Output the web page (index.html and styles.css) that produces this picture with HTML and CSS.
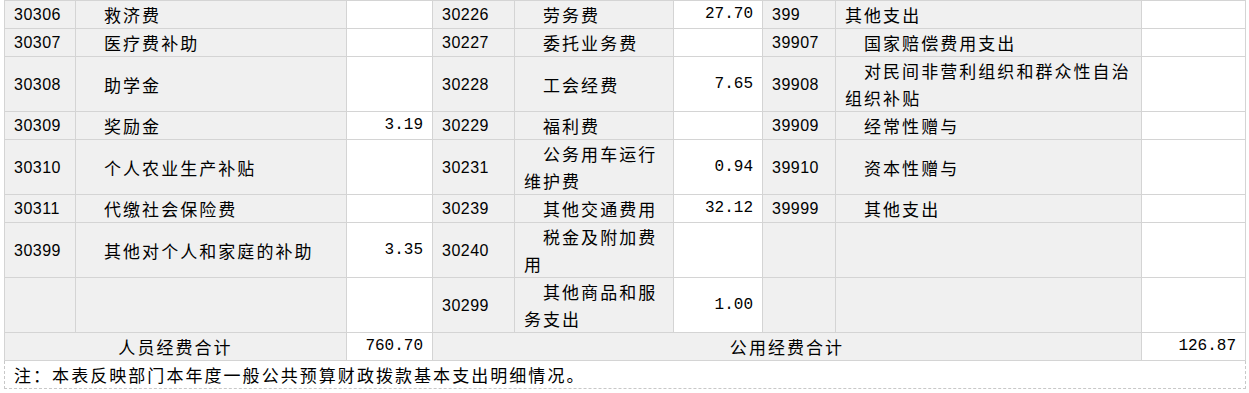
FILE: index.html
```html
<!DOCTYPE html>
<html lang="zh-CN">
<head>
<meta charset="utf-8">
<title>基本支出明细</title>
<link rel="stylesheet" href="styles.css">
</head>
<body>
<div class="wrap">
<table class="sheet">
  <colgroup>
    <col class="c1"><col class="c2"><col class="c3">
    <col class="c4"><col class="c5"><col class="c6">
    <col class="c7"><col class="c8"><col class="c9">
  </colgroup>
  <tbody>
    <tr>
      <td class="code">30306</td><td class="name">救济费</td><td class="amt"></td>
      <td class="code">30226</td><td class="name">劳务费</td><td class="amt">27.70</td>
      <td class="code">399</td><td class="name flat">其他支出</td><td class="amt"></td>
    </tr>
    <tr>
      <td class="code">30307</td><td class="name">医疗费补助</td><td class="amt"></td>
      <td class="code">30227</td><td class="name">委托业务费</td><td class="amt"></td>
      <td class="code">39907</td><td class="name">国家赔偿费用支出</td><td class="amt"></td>
    </tr>
    <tr>
      <td class="code">30308</td><td class="name">助学金</td><td class="amt"></td>
      <td class="code">30228</td><td class="name">工会经费</td><td class="amt">7.65</td>
      <td class="code">39908</td><td class="name">对民间非营利组织和群众性自治组织补贴</td><td class="amt"></td>
    </tr>
    <tr>
      <td class="code">30309</td><td class="name">奖励金</td><td class="amt">3.19</td>
      <td class="code">30229</td><td class="name">福利费</td><td class="amt"></td>
      <td class="code">39909</td><td class="name">经常性赠与</td><td class="amt"></td>
    </tr>
    <tr>
      <td class="code">30310</td><td class="name">个人农业生产补贴</td><td class="amt"></td>
      <td class="code">30231</td><td class="name">公务用车运行维护费</td><td class="amt">0.94</td>
      <td class="code">39910</td><td class="name">资本性赠与</td><td class="amt"></td>
    </tr>
    <tr>
      <td class="code">30311</td><td class="name">代缴社会保险费</td><td class="amt"></td>
      <td class="code">30239</td><td class="name">其他交通费用</td><td class="amt">32.12</td>
      <td class="code">39999</td><td class="name">其他支出</td><td class="amt"></td>
    </tr>
    <tr>
      <td class="code">30399</td><td class="name">其他对个人和家庭的补助</td><td class="amt">3.35</td>
      <td class="code">30240</td><td class="name">税金及附加费用</td><td class="amt"></td>
      <td class="code"></td><td class="name"></td><td class="amt"></td>
    </tr>
    <tr>
      <td class="code"></td><td class="name"></td><td class="amt"></td>
      <td class="code">30299</td><td class="name">其他商品和服务支出</td><td class="amt">1.00</td>
      <td class="code"></td><td class="name"></td><td class="amt"></td>
    </tr>
    <tr>
      <td class="total" colspan="2">人员经费合计</td><td class="amt">760.70</td>
      <td class="total" colspan="5">公用经费合计</td><td class="amt">126.87</td>
    </tr>
  </tbody>
</table>
<div class="note">注：本表反映部门本年度一般公共预算财政拨款基本支出明细情况。</div>
</div>
</body>
</html>
```
FILE: styles.css
```css
html, body {
  margin: 0;
  padding: 0;
  background: #ffffff;
}

.wrap {
  padding-left: 4px;
  width: 1242px;
}

.sheet {
  border-collapse: separate;
  border-spacing: 0;
  table-layout: fixed;
  width: 1242px;
  color: #000000;
  border-top: 1px solid #d4d4d4;
  border-left: 1px solid #d4d4d4;
}

.c1 { width: 71px; }
.c2 { width: 271px; }
.c3 { width: 86px; }
.c4 { width: 82px; }
.c5 { width: 159px; }
.c6 { width: 89px; }
.c7 { width: 73px; }
.c8 { width: 306px; }
.c9 { width: 104px; }

.sheet td {
  box-sizing: border-box;
  border-right: 1px solid #d4d4d4;
  border-bottom: 1px solid #d4d4d4;
  background: #f0f0f0;
  padding: 0 9px;
  line-height: 27px;
  vertical-align: middle;
  font-size: 16px;
  overflow: hidden;
}

.sheet td.code {
  font-family: "Liberation Sans", Arial, sans-serif;
  letter-spacing: 0.5px;
}

.sheet td.name {
  font-family: "Noto Sans CJK SC", "Noto Sans", sans-serif;
  font-size: 17px;
  letter-spacing: 2.05px;
  text-indent: 19px;
  word-break: break-all;
}

.sheet td.name.flat {
  text-indent: 0;
}

.sheet td.amt {
  background: #ffffff;
  text-align: right;
  font-family: "Liberation Mono", "DejaVu Sans Mono", monospace;
}

.sheet td.total {
  text-align: center;
  font-family: "Noto Sans CJK SC", "Noto Sans", sans-serif;
  font-size: 17px;
  letter-spacing: 2.05px;
}

.note {
  box-sizing: border-box;
  width: 1242px;
  height: 28px;
  padding: 0 9px;
  border-left: 1px dashed #c8c8c8;
  border-right: 1px dashed #c8c8c8;
  border-bottom: 1px dashed #c8c8c8;
  background: #ffffff;
  color: #000000;
  font-family: "Noto Sans CJK SC", "Noto Sans", sans-serif;
  font-size: 17px;
  line-height: 27px;
  letter-spacing: 2.05px;
  white-space: nowrap;
}
```
